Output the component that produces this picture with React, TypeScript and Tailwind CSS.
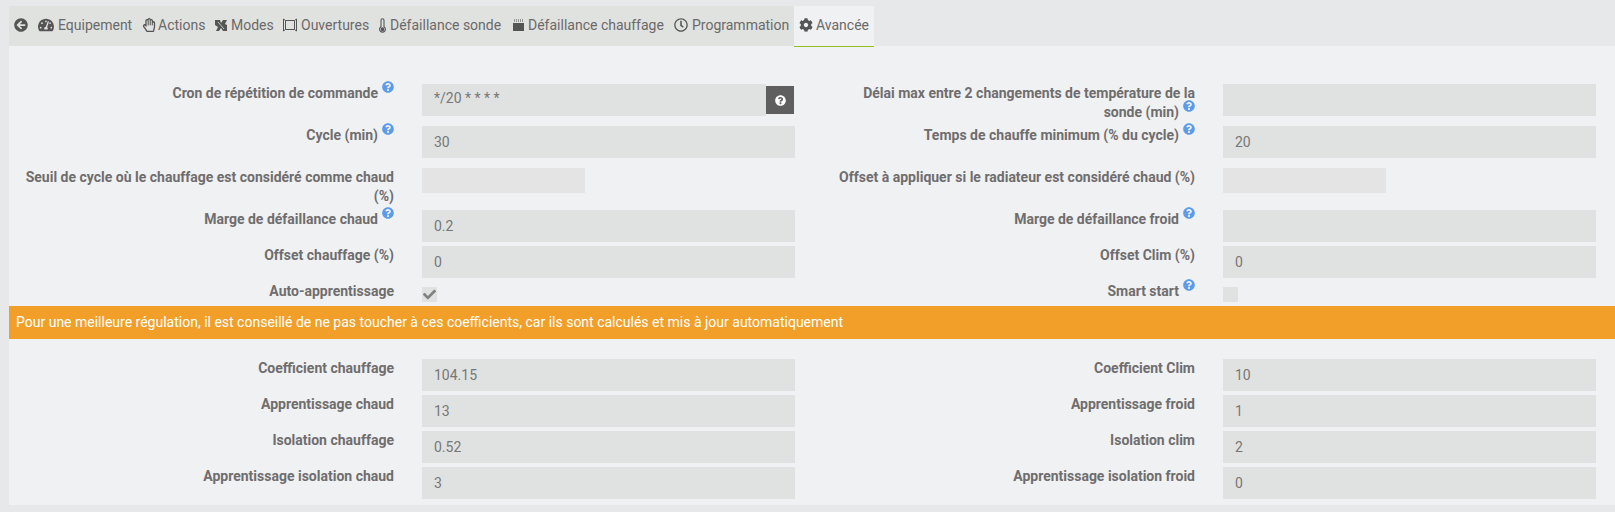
import React from "react";
import { FaArrowCircleLeft, FaCheck, FaCog, FaQuestionCircle, FaRegClock, FaRegHandPaper, FaTachometerAlt } from "react-icons/fa";

const ModesIcon = () => (
  <svg width="12" height="11" viewBox="0 0 12 11" fill="currentColor">
    <path d="M0 0h5l1 3 2-3h4l-2 4 2 1v6H8L6 8l-2 3H1l2-4-3-2z" />
    <path d="M3 2l6 7" stroke="#e0e1e0" strokeWidth="0.8" />
  </svg>
);

const WindowIcon = () => (
  <svg width="14" height="14" viewBox="0 0 14 14" fill="none" stroke="currentColor" strokeWidth="1">
    <path d="M2.5 2.5h9M2.5 11.5h9M2.5 2.5v9M11.5 2.5v9M.5 1v12M13.5 1v12M.5 1l2 1.5M.5 13l2-1.5M13.5 1l-2 1.5M13.5 13l-2-1.5" />
  </svg>
);

const ThermoIcon = () => (
  <svg width="7" height="15" viewBox="0 0 7 15" fill="none" stroke="currentColor" strokeWidth="1.1">
    <path d="M2 8.7V2.2a1.5 1.5 0 0 1 3 0v6.5a2.9 2.9 0 1 1-3 0z" />
    <circle cx="3.5" cy="11.2" r="1.3" fill="currentColor" />
  </svg>
);

const HeaterIcon = () => (
  <svg width="11" height="12" viewBox="0 0 11 12" fill="currentColor">
    <path d="M0 4h11v8H0z" />
    <path opacity="0.55" d="M1 0h1v3H1zM3 0h1v3H3zM5 0h1v3H5zM7 0h1v3H7zM9 0h1v3H9z" />
  </svg>
);

const tabs = [
  { label: "Equipement", icon: <FaTachometerAlt size={16} />, gap: "gap-1", width: "w-[104px]" },
  { label: "Actions", icon: <FaRegHandPaper size={14} />, gap: "gap-[2px]", width: "w-[73px]" },
  { label: "Modes", icon: <ModesIcon />, gap: "gap-1", width: "w-[68px]" },
  { label: "Ouvertures", icon: <WindowIcon />, gap: "gap-1", width: "w-[96px]" },
  { label: "Défaillance sonde", icon: <ThermoIcon />, gap: "gap-[4px]", width: "w-[134px]" },
  { label: "Défaillance chauffage", icon: <HeaterIcon />, gap: "gap-[4px]", width: "w-[161px]" },
  { label: "Programmation", icon: <FaRegClock size={14} />, gap: "gap-1", width: "w-[120px]" },
];

const Help = () => (
  <FaQuestionCircle size={12} className="relative -top-[7px] ml-[4px] inline-block text-[#5b9bea]" />
);

type FieldProps = {
  label: string;
  help?: boolean;
  value?: string;
  short?: boolean;
  check?: "on" | "off";
  cron?: boolean;
};

const Field = ({ label, help, value, short, check, cron }: FieldProps) => (
  <div className="flex items-start">
    <label className="min-w-0 flex-1 text-right text-[14px] leading-[19px] font-bold text-[#6f6d6d]">
      {label}
      {help && <Help />}
    </label>
    <div className="ml-[28px] w-[373px] shrink-0">
      {check ? (
        <div className="mt-[5px] flex h-[15px] w-[15px] items-center justify-center bg-[#e0e2e1] text-[#808080]">
          {check === "on" && <FaCheck size={13} />}
        </div>
      ) : cron ? (
        <div className="flex items-center pr-[1px]">
          <div className="flex h-[32px] flex-1 items-center bg-[#e0e2e1] px-[12px] pb-[3px] text-[14px] text-[#777]">{value}</div>
          <div className="flex h-[28px] w-[28px] items-center justify-center bg-[#5f5f5f] text-white">
            <FaQuestionCircle size={11} />
          </div>
        </div>
      ) : (
        <div className={`flex items-center px-[12px] text-[14px] text-[#777] ${short ? "h-[25px] w-[163px] bg-[#e3e4e3]" : "h-[32px] w-full bg-[#e0e2e1]"}`}>
          {value}
        </div>
      )}
    </div>
  </div>
);

const Row = ({ left, right, className }: { left: FieldProps; right: FieldProps; className: string }) => (
  <div className={`grid grid-cols-[786px_820px] ${className}`}>
    <div className="pl-[14px]">
      <Field {...left} />
    </div>
    <div className="pl-[41px] pr-[19px]">
      <Field {...right} />
    </div>
  </div>
);

export default function App() {
  return (
    <div className="h-[512px] w-[1615px] overflow-hidden bg-[#e7e8e9] pt-[6px] pb-[7px] pl-[9px] font-['Roboto',sans-serif]">
      <div className="flex h-full flex-col bg-[#eff1f3]">
        <div className="flex h-[40px] shrink-0 bg-[#e7e8e9] text-[14px] text-[#6b6969]">
          <div className="flex h-[40px] items-center bg-[#e0e2e0] pb-[2px] pl-[5px]">
            <span className="flex w-[24px] items-center text-[#555]">
              <FaArrowCircleLeft size={14} />
            </span>
            {tabs.map((t) => (
              <span key={t.label} className={`flex items-center whitespace-nowrap ${t.gap} ${t.width}`}>
                <span className="text-[#555]">{t.icon}</span>
                {t.label}
              </span>
            ))}
          </div>
          <div className="flex h-[41px] w-[80px] items-center gap-[3px] border-b border-[#93c01f] bg-[#eff1f3] pb-[2px] pl-[5px]">
            <FaCog size={14} className="text-[#555]" />
            Avancée
          </div>
        </div>

        <Row className="mt-[38px] h-[42px]" left={{ label: "Cron de répétition de commande", help: true, value: "*/20 * * * *", cron: true }} right={{ label: "Délai max entre 2 changements de température de la sonde (min)", help: true }} />
        <Row className="h-[42px]" left={{ label: "Cycle (min)", help: true, value: "30" }} right={{ label: "Temps de chauffe minimum (% du cycle)", help: true, value: "20" }} />
        <Row className="h-[42px]" left={{ label: "Seuil de cycle où le chauffage est considéré comme chaud (%)", short: true }} right={{ label: "Offset à appliquer si le radiateur est considéré chaud (%)", short: true }} />
        <Row className="h-[36px]" left={{ label: "Marge de défaillance chaud", help: true, value: "0.2" }} right={{ label: "Marge de défaillance froid", help: true }} />
        <Row className="h-[36px]" left={{ label: "Offset chauffage (%)", value: "0" }} right={{ label: "Offset Clim (%)", value: "0" }} />
        <Row className="h-[24px]" left={{ label: "Auto-apprentissage", check: "on" }} right={{ label: "Smart start", help: true, check: "off" }} />

        <div className="flex h-[33px] shrink-0 items-center bg-[#f19f28] pl-[7px] text-[14px] text-white">
          Pour une meilleure régulation, il est conseillé de ne pas toucher à ces coefficients, car ils sont calculés et mis à jour automatiquement
        </div>

        <Row className="mt-[20px] h-[36px]" left={{ label: "Coefficient chauffage", value: "104.15" }} right={{ label: "Coefficient Clim", value: "10" }} />
        <Row className="h-[36px]" left={{ label: "Apprentissage chaud", value: "13" }} right={{ label: "Apprentissage froid", value: "1" }} />
        <Row className="h-[36px]" left={{ label: "Isolation chauffage", value: "0.52" }} right={{ label: "Isolation clim", value: "2" }} />
        <Row className="h-[36px]" left={{ label: "Apprentissage isolation chaud", value: "3" }} right={{ label: "Apprentissage isolation froid", value: "0" }} />
      </div>
    </div>
  );
}
